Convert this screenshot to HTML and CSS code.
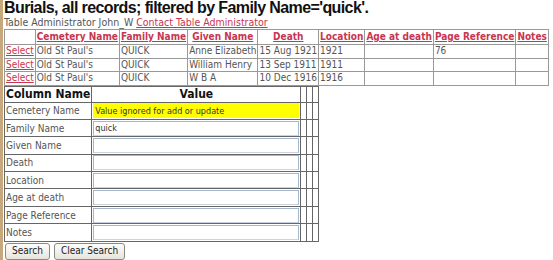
FILE: index.html
```html
<!DOCTYPE html>
<html lang="en">
<head>
    <meta charset="UTF-8">
    <title>Burials - Family Name quick</title>
    <link rel="stylesheet" href="styles.css">
</head>
<body>
    <div class="page">
        <h1 class="page-title">Burials, all records; filtered by Family Name='quick'.</h1>
        <div class="admin-line">
            Table Administrator John_W <a href="#">Contact Table Administrator</a>
        </div>

        <table class="records">
            <tr>
                <th></th>
                <th><a href="#">Cemetery Name</a></th>
                <th><a href="#">Family Name</a></th>
                <th><a href="#">Given Name</a></th>
                <th><a href="#">Death</a></th>
                <th><a href="#">Location</a></th>
                <th><a href="#">Age at death</a></th>
                <th><a href="#">Page Reference</a></th>
                <th><a href="#">Notes</a></th>
            </tr>
            <tr>
                <td><a href="#">Select</a></td>
                <td>Old St Paul's</td>
                <td>QUICK</td>
                <td>Anne Elizabeth</td>
                <td>15 Aug 1921</td>
                <td>1921</td>
                <td></td>
                <td>76</td>
                <td></td>
            </tr>
            <tr>
                <td><a href="#">Select</a></td>
                <td>Old St Paul's</td>
                <td>QUICK</td>
                <td>William Henry</td>
                <td>13 Sep 1911</td>
                <td>1911</td>
                <td></td>
                <td></td>
                <td></td>
            </tr>
            <tr>
                <td><a href="#">Select</a></td>
                <td>Old St Paul's</td>
                <td>QUICK</td>
                <td>W B A</td>
                <td>10 Dec 1916</td>
                <td>1916</td>
                <td></td>
                <td></td>
                <td></td>
            </tr>
        </table>

        <form class="search-form">
            <table class="fields">
                <tr>
                    <th class="col-name">Column Name</th>
                    <th class="col-value">Value</th>
                    <th class="col-pad"></th>
                    <th class="col-pad"></th>
                    <th class="col-pad"></th>
                </tr>
                <tr>
                    <td>Cemetery Name</td>
                    <td><input class="field ignored" type="text" value="Value ignored for add or update"></td>
                    <td></td><td></td><td></td>
                </tr>
                <tr>
                    <td>Family Name</td>
                    <td><input class="field" type="text" value="quick"></td>
                    <td></td><td></td><td></td>
                </tr>
                <tr>
                    <td>Given Name</td>
                    <td><input class="field" type="text"></td>
                    <td></td><td></td><td></td>
                </tr>
                <tr>
                    <td>Death</td>
                    <td><input class="field" type="text"></td>
                    <td></td><td></td><td></td>
                </tr>
                <tr>
                    <td>Location</td>
                    <td><input class="field" type="text"></td>
                    <td></td><td></td><td></td>
                </tr>
                <tr>
                    <td>Age at death</td>
                    <td><input class="field" type="text"></td>
                    <td></td><td></td><td></td>
                </tr>
                <tr>
                    <td>Page Reference</td>
                    <td><input class="field" type="text"></td>
                    <td></td><td></td><td></td>
                </tr>
                <tr>
                    <td>Notes</td>
                    <td><input class="field" type="text"></td>
                    <td></td><td></td><td></td>
                </tr>
            </table>

            <div class="buttons">
                <button type="button" class="btn">Search</button>
                <button type="button" class="btn">Clear Search</button>
            </div>
            <div class="more-buttons">
                <span class="dark-btn wide"></span>
                <span class="dark-btn wider"></span>
            </div>
        </form>
    </div>
</body>
</html>
```

FILE: styles.css
```css
* {
    box-sizing: border-box;
}

body {
    margin: 0;
    background: #fff;
    font-family: "DejaVu Sans Condensed", "DejaVu Sans", Verdana, sans-serif;
    font-size: 10px;
    color: #555;
    overflow: hidden;
}

.page {
    border-left: 3px solid #c6a87c;
    min-height: 260px;
    padding-left: 1px;
}

a {
    color: #c8354f;
}

.page-title {
    font-family: "Liberation Sans", Arial, sans-serif;
    font-size: 16px;
    font-weight: bold;
    letter-spacing: -0.6px;
    color: #111;
    margin: 0;
    line-height: 16px;
}

.admin-line {
    line-height: 13px;
    font-size: 10.5px;
}

.records {
    border-collapse: collapse;
    border: 1px solid #999;
    width: 542px;
}

.records th,
.records td {
    border: 1px solid #999;
    padding: 0 1px;
    line-height: 12px;
    white-space: nowrap;
    text-align: left;
}

.records th {
    padding: 1px 1px;
    text-align: center;
}

.records td {
    height: 13.5px;
}

.fields {
    border-collapse: collapse;
    border: 1px solid #666;
}

.fields th,
.fields td {
    border: 1px solid #666;
    padding: 0;
}

.fields th {
    font-size: 12px;
    color: #111;
    line-height: 15px;
    white-space: nowrap;
}

.fields .col-name {
    width: 87px;
    padding: 0 1px;
}

.fields .col-value {
    width: 208px;
}

.fields .col-pad {
    width: 6px;
}

.fields td {
    height: 17.4px;
    padding: 0 1px;
    white-space: nowrap;
}

.field {
    display: block;
    width: 206px;
    height: 15px;
    margin: 0;
    border: 1px solid #a5b7cc;
    border-bottom-color: #c9d4e0;
    padding: 0 1px;
    font-family: "DejaVu Sans Condensed", "DejaVu Sans", Verdana, sans-serif;
    font-size: 9px;
    color: #333;
    background: #fff;
}

.field.ignored {
    background: #ffff00;
    border-color: #ffff00;
}

.buttons {
    display: flex;
    gap: 4px;
    padding: 1px 0 0 1px;
}

.btn {
    height: 17px;
    padding: 0 6px;
    font-family: "DejaVu Sans Condensed", "DejaVu Sans", Verdana, sans-serif;
    font-size: 10px;
    color: #222;
    background: linear-gradient(#fdfdfb, #e6e4dc);
    border: 1px solid #8a8a84;
    border-radius: 3px;
    line-height: 14px;
}

.more-buttons {
    display: flex;
    gap: 7px;
    padding: 0 0 0 1px;
}

.dark-btn {
    height: 10px;
    border-top: 2px solid #2c4a78;
    border-left: 1px solid #2c4a78;
    border-right: 1px solid #2c4a78;
    border-radius: 2px 2px 0 0;
}

.dark-btn.wide {
    width: 80px;
}

.dark-btn.wider {
    width: 88px;
}
```
